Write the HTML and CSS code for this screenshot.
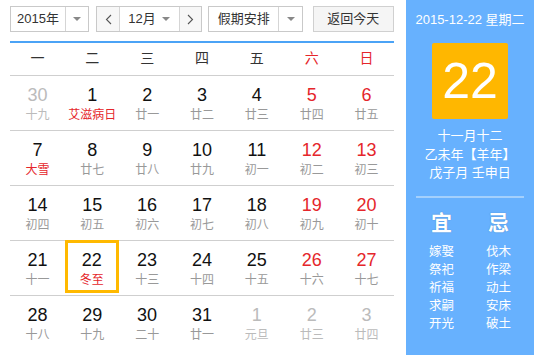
FILE: index.html
```html
<!DOCTYPE html>
<html lang="zh-CN">
<head>
    <meta charset="UTF-8">
    <title>万年历</title>
    <link rel="stylesheet" href="styles.css">
</head>
<body>
    <div class="wrap">
        <div class="main">
            <div class="toolbar">
                <div class="select year-select">
                    <span class="select-text">2015年</span>
                    <span class="select-arrow"><i class="tri"></i></span>
                </div>
                <div class="month-group">
                    <span class="nav-btn"><svg width="7" height="11" viewBox="0 0 7 11"><path d="M6 1 L1.5 5.5 L6 10" fill="none" stroke="#555" stroke-width="1.1"/></svg></span>
                    <span class="month-text">12月 <i class="tri"></i></span>
                    <span class="nav-btn"><svg width="7" height="11" viewBox="0 0 7 11"><path d="M1 1 L5.5 5.5 L1 10" fill="none" stroke="#555" stroke-width="1.1"/></svg></span>
                </div>
                <div class="select holiday-select">
                    <span class="select-text">假期安排</span>
                    <span class="select-arrow"><i class="tri"></i></span>
                </div>
                <div class="today-btn">返回今天</div>
            </div>

            <div class="week-head">
                <span>一</span><span>二</span><span>三</span><span>四</span><span>五</span><span class="red">六</span><span class="red">日</span>
            </div>

            <div class="days" id="days"></div>
        </div>

        <div class="side">
            <div class="side-date">2015-12-22 星期二</div>
            <div class="big-day">22</div>
            <div class="lunar-info">
                <p>十一月十二</p>
                <p>乙未年【羊年】</p>
                <p>戊子月 壬申日</p>
            </div>
            <div class="divider"></div>
            <div class="yi-ji">
                <div class="yj-col">
                    <h3>宜</h3>
                    <p>嫁娶</p><p>祭祀</p><p>祈福</p><p>求嗣</p><p>开光</p>
                </div>
                <div class="yj-col">
                    <h3>忌</h3>
                    <p>伐木</p><p>作梁</p><p>动土</p><p>安床</p><p>破土</p>
                </div>
            </div>
        </div>
    </div>

    <script>
        // [day, lunar, other month, festival]
        var days = [
            [30, "十九", 1], [1, "艾滋病日", 0, 1], [2, "廿一"], [3, "廿二"], [4, "廿三"], [5, "廿四"], [6, "廿五"],
            [7, "大雪", 0, 1], [8, "廿七"], [9, "廿八"], [10, "廿九"], [11, "初一"], [12, "初二"], [13, "初三"],
            [14, "初四"], [15, "初五"], [16, "初六"], [17, "初七"], [18, "初八"], [19, "初九"], [20, "初十"],
            [21, "十一"], [22, "冬至", 0, 1], [23, "十三"], [24, "十四"], [25, "十五"], [26, "十六"], [27, "十七"],
            [28, "十八"], [29, "十九"], [30, "二十"], [31, "廿一"], [1, "元旦", 1], [2, "廿三", 1], [3, "廿四", 1]
        ];

        var box = document.getElementById('days');
        var html = "";
        days.forEach(function (d, i) {
            var cls = "day";
            if (d[2]) cls += " other";
            if (i % 7 >= 5) cls += " weekend";
            if (d[0] === 22 && !d[2]) cls += " today";
            html += '<div class="' + cls + '"><div class="cell">' +
                '<span class="num">' + d[0] + '</span>' +
                '<span class="lunar' + (d[3] ? ' fest' : '') + '">' + d[1] + '</span>' +
                '</div></div>';
        });
        box.innerHTML = html;
    </script>
</body>
</html>
```

FILE: styles.css
```css
body {
    margin: 0;
    font-family: "Liberation Sans", "Noto Sans CJK SC", sans-serif;
    background: #fff;
    color: #333;
}
.wrap {
    display: flex;
    height: 355px;
}
.main {
    width: 384px;
    margin-left: 10px;
    margin-right: 12px;
}

/* toolbar */
.toolbar {
    display: flex;
    align-items: flex-start;
    padding-top: 6px;
    height: 35px;
    border-bottom: 2px solid #4ba3f6;
}
.select, .month-group {
    display: flex;
    height: 24px;
    border: 1px solid #c9c9c9;
    font-size: 13px;
    line-height: 24px;
    color: #333;
}
.year-select {
    width: 78px;
}
.year-select .select-text {
    width: 54px;
    text-align: center;
}
.select-arrow {
    flex: 1;
    border-left: 1px solid #d5d5d5;
    display: flex;
    align-items: center;
    justify-content: center;
}
.tri {
    display: inline-block;
    width: 0;
    height: 0;
    border-left: 4px solid transparent;
    border-right: 4px solid transparent;
    border-top: 4px solid #888;
    vertical-align: middle;
}
.month-group {
    margin-left: 7px;
    width: 104px;
    background: #f7f7f7;
}
.nav-btn {
    width: 22px;
    display: flex;
    align-items: center;
    justify-content: center;
}
.month-text {
    width: 59px;
    border-left: 1px solid #d5d5d5;
    border-right: 1px solid #d5d5d5;
    background: #fff;
    text-align: center;
}
.month-text .tri {
    margin-left: 3px;
    margin-top: -2px;
}
.holiday-select {
    margin-left: 6px;
    width: 93px;
}
.holiday-select .select-text {
    width: 69px;
    text-align: center;
}
.today-btn {
    margin-left: 10px;
    width: 80px;
    height: 24px;
    border: 1px solid #d0d0d0;
    background: #f5f5f5;
    font-size: 13px;
    line-height: 24px;
    text-align: center;
    color: #333;
}

/* week header */
.week-head {
    display: grid;
    grid-template-columns: repeat(7, 1fr);
    height: 32px;
    line-height: 30px;
    border-bottom: 1px solid #cfcfcf;
    font-size: 14px;
    text-align: center;
    color: #333;
}
.week-head .red {
    color: #e5262b;
}

/* day grid */
.days {
    display: grid;
    grid-template-columns: repeat(7, 1fr);
}
.day {
    height: 54px;
    border-bottom: 1px solid #cfcfcf;
    text-align: center;
}
.days .day:nth-last-child(-n+7) {
    border-bottom: none;
}
.cell {
    height: 100%;
    box-sizing: border-box;
    padding-top: 8px;
}
.num {
    display: block;
    font-size: 18px;
    line-height: 22px;
    color: #111;
}
.lunar {
    display: block;
    font-size: 12px;
    line-height: 18px;
    color: #999;
}
.weekend .num {
    color: #e5262b;
}
.other .num, .other .lunar {
    color: #bbb;
}
.lunar.fest {
    color: #e5262b;
}
.today .cell {
    border: 3px solid #ffb900;
    margin: -1px 1px 0 0;
    padding-top: 6px;
    height: 53px;
}

/* side panel */
.side {
    width: 128px;
    background: #67b1fe;
    color: #fff;
    text-align: center;
}
.side-date {
    font-size: 13px;
    line-height: 16px;
    margin-top: 12px;
}
.big-day {
    width: 76px;
    height: 76px;
    margin: 15px auto 0;
    background: #ffb700;
    border-radius: 2px;
    font-size: 50px;
    line-height: 76px;
}
.lunar-info {
    margin-top: 8px;
    font-size: 13px;
}
.lunar-info p {
    margin: 0;
    line-height: 18.5px;
}
.divider {
    height: 2px;
    background: #a4d0fc;
    margin: 13px 10px 0 10px;
}
.yi-ji {
    display: flex;
    justify-content: center;
    margin-top: 12px;
}
.yj-col {
    width: 57px;
}
.yj-col h3 {
    margin: 0 0 7px;
    font-size: 21px;
    line-height: 26px;
    font-weight: bold;
    text-shadow: 0 0 1px rgba(0, 60, 120, 0.5);
}
.yj-col p {
    margin: 0;
    font-size: 12.5px;
    line-height: 18px;
}
```
